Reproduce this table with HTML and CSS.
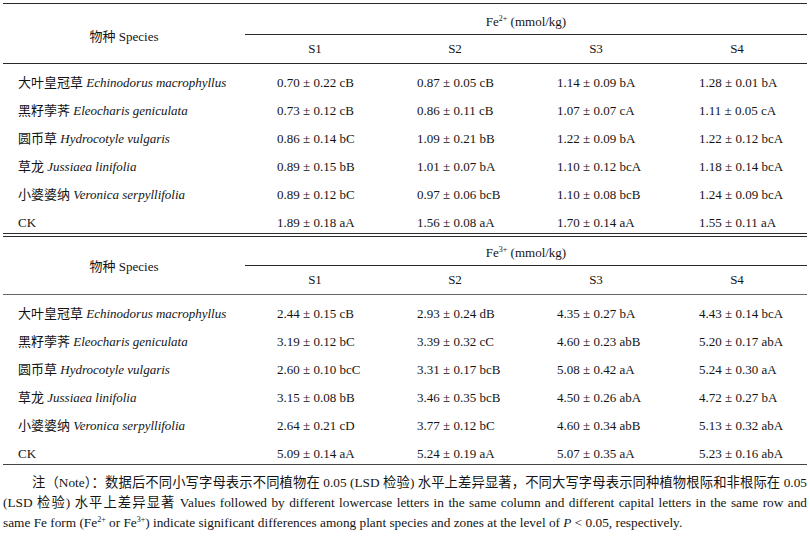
FILE: index.html
```html
<!DOCTYPE html>
<html lang="zh">
<head>
<meta charset="utf-8">
<link rel="stylesheet" href="styles.css">
</head>
<body>
<div class="page">
  <div class="tbl tbl-one">
    <div class="species"><span>物种 Species</span></div>
    <div class="fe fe-one"><span>Fe<sup>2+</sup> (mmol/kg)</span></div>
    <div class="sh">S1</div><div class="sh">S2</div><div class="sh">S3</div><div class="sh">S4</div>

    <div class="lbl first">大叶皇冠草 <i>Echinodorus macrophyllus</i></div>
    <div class="val first">0.70 ± 0.22 cB</div><div class="val first">0.87 ± 0.05 cB</div><div class="val first">1.14 ± 0.09 bA</div><div class="val first">1.28 ± 0.01 bA</div>

    <div class="lbl">黑籽荸荠 <i>Eleocharis geniculata</i></div>
    <div class="val">0.73 ± 0.12 cB</div><div class="val">0.86 ± 0.11 cB</div><div class="val">1.07 ± 0.07 cA</div><div class="val">1.11 ± 0.05 cA</div>

    <div class="lbl">圆币草 <i>Hydrocotyle vulgaris</i></div>
    <div class="val">0.86 ± 0.14 bC</div><div class="val">1.09 ± 0.21 bB</div><div class="val">1.22 ± 0.09 bA</div><div class="val">1.22 ± 0.12 bcA</div>

    <div class="lbl">草龙 <i>Jussiaea linifolia</i></div>
    <div class="val">0.89 ± 0.15 bB</div><div class="val">1.01 ± 0.07 bA</div><div class="val">1.10 ± 0.12 bcA</div><div class="val">1.18 ± 0.14 bcA</div>

    <div class="lbl">小婆婆纳 <i>Veronica serpyllifolia</i></div>
    <div class="val">0.89 ± 0.12 bC</div><div class="val">0.97 ± 0.06 bcB</div><div class="val">1.10 ± 0.08 bcB</div><div class="val">1.24 ± 0.09 bcA</div>

    <div class="lbl last">CK</div>
    <div class="val last">1.89 ± 0.18 aA</div><div class="val last">1.56 ± 0.08 aA</div><div class="val last">1.70 ± 0.14 aA</div><div class="val last">1.55 ± 0.11 aA</div>
  </div>

  <div class="tbl tbl-two">
    <div class="species"><span>物种 Species</span></div>
    <div class="fe fe-two"><span>Fe<sup>3+</sup> (mmol/kg)</span></div>
    <div class="sh sh-two">S1</div><div class="sh sh-two">S2</div><div class="sh sh-two">S3</div><div class="sh sh-two">S4</div>

    <div class="lbl first">大叶皇冠草 <i>Echinodorus macrophyllus</i></div>
    <div class="val first">2.44 ± 0.15 cB</div><div class="val first">2.93 ± 0.24 dB</div><div class="val first">4.35 ± 0.27 bA</div><div class="val first">4.43 ± 0.14 bcA</div>

    <div class="lbl">黑籽荸荠 <i>Eleocharis geniculata</i></div>
    <div class="val">3.19 ± 0.12 bC</div><div class="val">3.39 ± 0.32 cC</div><div class="val">4.60 ± 0.23 abB</div><div class="val">5.20 ± 0.17 abA</div>

    <div class="lbl">圆币草 <i>Hydrocotyle vulgaris</i></div>
    <div class="val">2.60 ± 0.10 bcC</div><div class="val">3.31 ± 0.17 bcB</div><div class="val">5.08 ± 0.42 aA</div><div class="val">5.24 ± 0.30 aA</div>

    <div class="lbl">草龙 <i>Jussiaea linifolia</i></div>
    <div class="val">3.15 ± 0.08 bB</div><div class="val">3.46 ± 0.35 bcB</div><div class="val">4.50 ± 0.26 abA</div><div class="val">4.72 ± 0.27 bA</div>

    <div class="lbl">小婆婆纳 <i>Veronica serpyllifolia</i></div>
    <div class="val">2.64 ± 0.21 cD</div><div class="val">3.77 ± 0.12 bC</div><div class="val">4.60 ± 0.34 abB</div><div class="val">5.13 ± 0.32 abA</div>

    <div class="lbl last">CK</div>
    <div class="val last">5.09 ± 0.14 aA</div><div class="val last">5.24 ± 0.19 aA</div><div class="val last">5.07 ± 0.35 aA</div><div class="val last">5.23 ± 0.16 abA</div>
  </div>

  <div class="note">
    <div class="nl nl-first">注（Note）：数据后不同小写字母表示不同植物在 0.05 (LSD 检验) 水平上差异显著，不同大写字母表示同种植物根际和非根际在 0.05</div>
    <div class="nl">(LSD 检验) 水平上差异显著 Values followed by different lowercase letters in the same column and different capital letters in the same row and</div>
    <div class="nl nl-last">same Fe form (Fe<sup>2+</sup> or Fe<sup>3+</sup>) indicate significant differences among plant species and zones at the level of <i>P</i> &lt; 0.05, respectively.</div>
  </div>
</div>
</body>
</html>
```

FILE: styles.css
```css
html, body {
  margin: 0;
  padding: 0;
  background: #ffffff;
}

body {
  font-family: "Liberation Serif", "Noto Sans CJK SC", serif;
  font-size: 13px;
  color: #141414;
}

.page {
  padding: 3px 3px 0 3px;
  width: 804px;
}

.tbl {
  display: grid;
  grid-template-columns: 242px 140px 140px 142px 140px;
  border-top: 1px solid #2a2a2a;
}

.tbl-one {
  border-bottom: 1px solid #2a2a2a;
}

.tbl-two {
  margin-top: 2px;
  border-bottom: 1px solid #444;
}

.species {
  grid-row: 1 / span 2;
  grid-column: 1;
  display: flex;
  align-items: center;
  justify-content: center;
  padding-top: 3px;
  border-bottom: 1px solid #2a2a2a;
}

.tbl-two .species {
  border-bottom-color: #666;
  padding-top: 0;
}

.fe {
  grid-row: 1;
  grid-column: 2 / span 4;
  display: flex;
  align-items: center;
  justify-content: center;
  border-bottom: 1px solid #2a2a2a;
  box-sizing: border-box;
}

.fe-one {
  height: 31px;
  padding-top: 6px;
}

.fe-two {
  height: 29px;
  padding-top: 3px;
}

.sh {
  grid-row: 2;
  height: 29px;
  box-sizing: border-box;
  display: flex;
  align-items: center;
  justify-content: center;
  border-bottom: 1px solid #2a2a2a;
}

.sh-two {
  border-bottom-color: #666;
}

sup {
  font-size: 8px;
  line-height: 0;
  vertical-align: 5px;
}

.lbl, .val {
  line-height: 20px;
  padding: 4px 0;
  white-space: nowrap;
}

.lbl {
  padding-left: 15px;
}

.val {
  padding-left: 32px;
}

.first {
  padding-top: 9px;
}

.last {
  padding-top: 4px;
  padding-bottom: 0;
}

.note {
  margin-top: 8px;
  font-size: 13.3px;
  line-height: 20px;
}

.nl {
  text-align: justify;
  text-align-last: justify;
  white-space: nowrap;
}

.nl-first {
  padding-left: 29px;
}

.nl-last {
  text-align-last: left;
}
```
